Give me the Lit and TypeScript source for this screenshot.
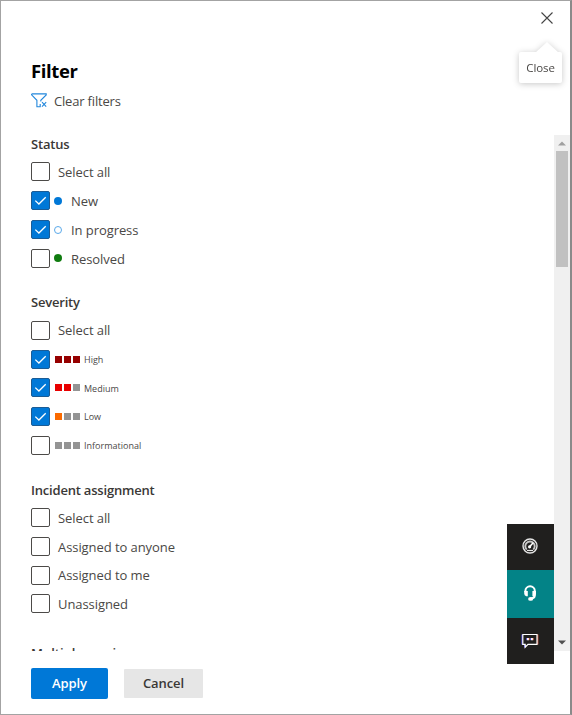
import { LitElement, html, css, nothing } from "lit";
import { customElement, property } from "lit/decorators.js";
import { classMap } from "lit/directives/class-map.js";

interface Option {
  label: string;
  checked?: boolean;
  dot?: "new" | "progress" | "resolved";
  level?: string[];
}

interface Section {
  title: string;
  options: Option[];
}

const SECTIONS: Section[] = [
  {
    title: "Status",
    options: [
      { label: "Select all" },
      { label: "New", checked: true, dot: "new" },
      { label: "In progress", checked: true, dot: "progress" },
      { label: "Resolved", dot: "resolved" },
    ],
  },
  {
    title: "Severity",
    options: [
      { label: "Select all" },
      { label: "High", checked: true, level: ["high", "high", "high"] },
      { label: "Medium", checked: true, level: ["medium", "medium", "off"] },
      { label: "Low", checked: true, level: ["low", "off", "off"] },
      { label: "Informational", level: ["off", "off", "off"] },
    ],
  },
  {
    title: "Incident assignment",
    options: [
      { label: "Select all" },
      { label: "Assigned to anyone" },
      { label: "Assigned to me" },
      { label: "Unassigned" },
    ],
  },
  { title: "Multiple services", options: [] },
];

@customElement("filter-option")
class FilterOption extends LitElement {
  @property({ attribute: false }) option!: Option;

  static styles = css`
    :host {
      display: flex;
      align-items: center;
      height: 28.85px;
      color: #4a4846;
    }
    .box {
      box-sizing: border-box;
      width: 19px;
      height: 19px;
      flex: none;
      border: 1px solid #4c4a48;
      border-radius: 2px;
      background: #fff;
    }
    .box.checked {
      background: #0078d7;
      border-color: #1c5c95;
    }
    svg {
      display: block;
    }
    .dot {
      box-sizing: border-box;
      width: 8px;
      height: 8px;
      border-radius: 50%;
      margin: 0 1px 0 4px;
    }
    .new { background: #0078d7; }
    .progress { border: 1px solid #5aa9ea; }
    .resolved { background: #107c10; }
    .label {
      margin-left: 8px;
      font-size: 13px;
      line-height: 18px;
      letter-spacing: -0.07px;
      white-space: nowrap;
      padding-top: 0.6px;
    }
    .level {
      display: flex;
      gap: 2px;
      margin-left: 5px;
    }
    .level i { width: 7px; height: 7px; }
    .high { background: #960000; }
    .medium { background: #e80000; }
    .low { background: #fb6a00; }
    .off { background: #949494; }
    .small {
      margin-left: 4px;
      padding-top: 1.4px;
      font-size: 9px;
      letter-spacing: 0;
    }
  `;

  render() {
    const { label, checked, dot, level } = this.option;
    return html`
      <span class=${classMap({ box: true, checked: !!checked })}>
        ${checked
          ? html`<svg width="17" height="17" viewBox="0 0 17 17" fill="none" stroke="#fff" stroke-width="1.3">
              <path d="M3.3 8.6 6.9 12 13.7 5.2" />
            </svg>`
          : nothing}
      </span>
      ${dot ? html`<span class="dot ${dot}"></span>` : nothing}
      ${level ? html`<span class="level">${level.map((l) => html`<i class=${l}></i>`)}</span>` : nothing}
      <span class=${classMap({ label: true, small: !!level })}>${label}</span>
    `;
  }
}

@customElement("app-root")
class AppRoot extends LitElement {
  static styles = css`
    :host {
      display: block;
      position: relative;
      box-sizing: border-box;
      width: 572px;
      height: 715px;
      overflow: hidden;
      background: #fff;
      border: 1px solid #a3a3a3;
      border-right: 2px solid #8a8a8a;
      font-family: "Open Sans", "Noto Sans", sans-serif;
      color: #4a4846;
    }
    .panel {
      display: flex;
      flex-direction: column;
      height: 713px;
    }
    .top {
      display: flex;
      justify-content: flex-end;
      height: 34px;
      padding: 11px 17px 0 0;
      box-sizing: border-box;
    }
    svg { display: block; }
    h1 {
      margin: 24px 0 0 30px;
      font-size: 18.5px;
      line-height: 24px;
      font-weight: 700;
      letter-spacing: -0.4px;
      color: #000;
    }
    .clear {
      display: flex;
      align-items: center;
      gap: 7px;
      margin: 9px 0 0 30px;
      height: 18px;
      font-size: 13px;
      letter-spacing: -0.18px;
    }
    .clear svg { margin-bottom: 1px; }
    .scroller {
      display: flex;
      height: 516px;
      margin-top: 25px;
      overflow: hidden;
    }
    .list {
      flex: 1;
      padding-left: 30px;
      overflow: hidden;
    }
    h2 {
      margin: 0;
      font-size: 13px;
      line-height: 18px;
      font-weight: 600;
      letter-spacing: -0.2px;
      color: #3a3836;
    }
    section { margin-bottom: 20.6px; }
    section h2 { margin-bottom: 4.4px; }
    section:last-child { margin-top: 26px; }
    section:last-child h2 { letter-spacing: 0; }
    .bar {
      display: flex;
      flex-direction: column;
      align-items: center;
      width: 16px;
      background: #f0f0f0;
    }
    .thumb {
      width: 12px;
      height: 116px;
      margin: 5px 0 auto;
      background: #c1c1c1;
    }
    .up { margin-top: 6px; }
    .down { margin-bottom: 6px; }
    .actions {
      display: flex;
      align-items: center;
      gap: 16px;
      margin: 17px 0 0 30px;
    }
    button {
      font: 600 13px/18px "Open Sans", sans-serif;
      letter-spacing: -0.1px;
      padding: 0 0 1px;
      border: 0;
      border-radius: 1px;
      width: 79px;
      height: 29px;
      background: #e6e6e6;
      color: #3a3836;
    }
    .primary {
      width: 77px;
      height: 31px;
      border-radius: 2px;
      background: #0078d7;
      color: #fff;
    }
    .tip {
      position: absolute;
      left: 518px;
      top: 51px;
      width: 43px;
      height: 31px;
      background: #fff;
      border-radius: 2px;
      filter: drop-shadow(0 1px 3px rgba(0, 0, 0, 0.22));
      font-size: 11.5px;
      line-height: 32px;
      letter-spacing: -0.1px;
      text-align: center;
    }
    .tip::before {
      content: "";
      position: absolute;
      left: 16px;
      top: -10px;
      border: solid transparent;
      border-width: 0 12px 11px;
      border-bottom-color: #fff;
    }
    .dock {
      position: absolute;
      left: 506px;
      top: 523px;
      width: 47px;
      height: 140px;
      display: flex;
      flex-direction: column;
      background: #201f1e;
    }
    .cell {
      display: flex;
      align-items: center;
      justify-content: center;
      height: 46px;
    }
    .cell svg { margin-right: 1px; }
    .gauge svg { margin-bottom: 2px; }
    .help { height: 48px; background: #038387; }
    .help svg { margin-bottom: 2px; }
  `;

  render() {
    return html`
      <div class="panel">
        <div class="top">
          <svg width="12" height="12" viewBox="0 0 12 12" stroke="#444" stroke-width="1.1">
            <path d="M.5 .5 11.5 11.5M11.5 .5 .5 11.5" />
          </svg>
        </div>
        <h1>Filter</h1>
        <div class="clear">
          <svg width="16" height="15" viewBox="0 0 16 15" fill="none" stroke="#2287dc" stroke-width="1.1">
            <path d="M.6 .9H15.2V1.9L9.8 7.3V8.5M.6 .9V1.9L5.9 7.3V13.8H9.2V11" />
            <path d="M11 9.2 15.2 13.6M15.2 9.2 11 13.6" />
          </svg>
          <span>Clear filters</span>
        </div>
        <div class="scroller">
          <div class="list">
            ${SECTIONS.map(
              (s) => html`<section>
                <h2>${s.title}</h2>
                ${s.options.map((o) => html`<filter-option .option=${o}></filter-option>`)}
              </section>`
            )}
          </div>
          <div class="bar">
            <svg class="up" width="8" height="5" viewBox="0 0 8 5" fill="#a0a0a0"><path d="M0 4.5 4 .5 8 4.5Z" /></svg>
            <div class="thumb"></div>
            <svg class="down" width="8" height="5" viewBox="0 0 8 5" fill="#505050"><path d="M0 .5 4 4.5 8 .5Z" /></svg>
          </div>
        </div>
        <div class="actions">
          <button class="primary">Apply</button>
          <button>Cancel</button>
        </div>
      </div>
      <div class="tip">Close</div>
      <div class="dock">
        <div class="cell gauge">
          <svg width="16" height="16" viewBox="0 0 16 16" fill="none" stroke="#e6e6e6">
            <circle cx="8" cy="8" r="7" stroke-width="1.4" />
            <path d="M4.7 11.6A4.7 4.7 0 1 1 11.3 11.6" stroke-width="1.9" stroke="#c8c8c8" />
            <circle cx="7.6" cy="8.8" r="1.6" fill="#fff" stroke="none" />
            <path d="M7.6 8.8 11.2 4.8" stroke-width="1.6" stroke="#fff" />
            <path d="M5 12.5H11" stroke-width="1.2" />
          </svg>
        </div>
        <div class="cell help">
          <svg width="14" height="16" viewBox="0 0 14 16" fill="none" stroke="#fff">
            <path d="M2.4 7V6A4.7 4.7 0 0 1 11.8 6V10.5Q11.4 13.4 8 13.6" stroke-width="2" />
            <path d="M1.2 6H4.8V11.2H3.2Q1.2 10.6 1.2 8.5ZM9.4 6H13V8.5Q13 10.6 11 11.2H9.4Z" fill="#fff" stroke="none" />
            <ellipse cx="7.6" cy="13.9" rx="2.5" ry="1.9" fill="#fff" stroke="none" />
          </svg>
        </div>
        <div class="cell">
          <svg width="18" height="16" viewBox="0 0 18 16" fill="none">
            <path d="M1 1.5V11.5H3.5V14.5" stroke="#5a5aff" stroke-width="1" />
            <path d="M16.8 1.5V11.5" stroke="#ff6a4a" stroke-width="1" />
            <path d="M1.8 1.5H16V11.3H7L4.2 14.2V11.3H1.8Z" stroke="#fff" stroke-width="1.2" />
            <path d="M6 5H8V7.2H6ZM10 5H12V7.2H10Z" fill="#fff" />
            <path d="M5.6 5V7.2M9.6 5V7.2" stroke="#6a6aff" stroke-width=".8" />
            <path d="M8.2 5V7.2M12.2 5V7.2" stroke="#ff7a5a" stroke-width=".8" />
          </svg>
        </div>
      </div>
    `;
  }
}
